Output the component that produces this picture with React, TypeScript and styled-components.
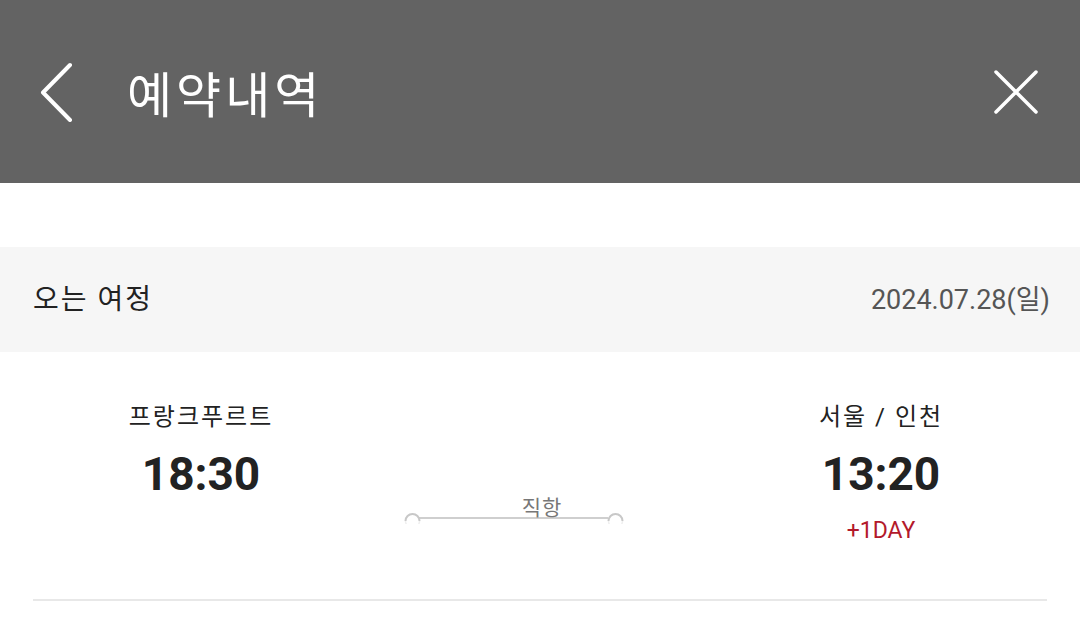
import React from "react";
import styled, { createGlobalStyle } from "styled-components";

const Global = createGlobalStyle`
  html, body { margin: 0; padding: 0; background: #ffffff; }
  body { font-family: Roboto, "Noto Sans CJK KR", sans-serif; color: #222; }
  * { box-sizing: border-box; }
`;

const Page = styled.div`
  width: 1080px;
  min-height: 633px;
  background: #fff;
  overflow: hidden;
`;

const Header = styled.header`
  height: 183px;
  background: #636363;
  display: flex;
  align-items: center;
  padding: 0 41px 0 38px;
`;

const IconButton = styled.button`
  background: none;
  border: 0;
  padding: 0;
  display: flex;
  align-items: center;
  justify-content: center;
  cursor: pointer;
`;

const Title = styled.h1`
  margin: 0 0 0 49px;
  flex: 1;
  color: #fff;
  font-family: "Noto Sans CJK KR", sans-serif;
  font-weight: 400;
  font-size: 49px;
  line-height: 60px;
  letter-spacing: 4px;
`;

const Spacer = styled.div`
  height: 64px;
`;

const SectionBar = styled.div`
  height: 105px;
  background: #f6f6f6;
  display: flex;
  align-items: center;
  justify-content: space-between;
  padding: 0 30px 0 33px;
`;

const SectionTitle = styled.span`
  font-size: 28px;
  color: #222;
  line-height: 36px;
  letter-spacing: 2px;
`;

const SectionDate = styled.span`
  font-size: 27px;
  color: #555;
  line-height: 36px;
`;

const Route = styled.div`
  margin: 0 33px;
  padding: 48px 0 54px;
  display: grid;
  grid-template-columns: 336px 1fr 332px;
  border-bottom: 2px solid #e8e8e8;
`;

const Endpoint = styled.div`
  display: flex;
  flex-direction: column;
  align-items: center;
`;

const City = styled.div`
  font-size: 24px;
  line-height: 30px;
  color: #222;
  letter-spacing: 2px;
  margin-top: 2px;
`;

const Time = styled.div`
  margin-top: 15px;
  font-size: 46px;
  line-height: 54px;
  font-weight: 700;
  color: #222;
`;

const NextDay = styled.div<{ $hidden?: boolean }>`
  margin-top: 16px;
  font-size: 23px;
  line-height: 28px;
  color: #b3192b;
  visibility: ${(p) => (p.$hidden ? "hidden" : "visible")};
`;

const Middle = styled.div`
  display: flex;
  flex-direction: column;
  align-items: center;
  padding-top: 96px;
`;

const Direct = styled.div`
  font-size: 21px;
  line-height: 24px;
  color: #777;
  letter-spacing: 1px;
  position: relative;
  z-index: 1;
`;

const Track = styled.svg`
  display: block;
  margin: -10px 0 0 -54px;
`;

const Back = () => (
  <svg width="40" height="60" viewBox="0 0 40 60">
    <polyline
      points="32,9 5,36.5 32,64"
      transform="translate(0,-6)"
      fill="none"
      stroke="#fff"
      strokeWidth="4"
      strokeLinecap="round"
      strokeLinejoin="round"
    />
  </svg>
);

const Close = () => (
  <svg width="46" height="46" viewBox="0 0 46 46">
    <path
      d="M3 3 L43 43 M43 3 L3 43"
      fill="none"
      stroke="#fff"
      strokeWidth="3.5"
      strokeLinecap="round"
    />
  </svg>
);

export default function App() {
  return (
    <Page>
      <Global />
      <Header>
        <IconButton aria-label="뒤로">
          <Back />
        </IconButton>
        <Title>예약내역</Title>
        <IconButton aria-label="닫기">
          <Close />
        </IconButton>
      </Header>
      <Spacer />
      <SectionBar>
        <SectionTitle>오는 여정</SectionTitle>
        <SectionDate>2024.07.28(일)</SectionDate>
      </SectionBar>
      <Route>
        <Endpoint>
          <City>프랑크푸르트</City>
          <Time>18:30</Time>
        </Endpoint>
        <Middle>
          <Direct>직항</Direct>
          <Track width="224" height="14" viewBox="0 0 224 14">
            <line x1="16" y1="8" x2="205" y2="8" stroke="#cfcfcf" strokeWidth="2" />
            <path d="M2.5 11 A7 7 0 0 1 16.5 11" fill="none" stroke="#c8c8c8" strokeWidth="2" />
            <path d="M2.5 11 A7 7 0 0 0 16.5 11" fill="none" stroke="#efefef" strokeWidth="1.5" />
            <path d="M205.5 11 A7 7 0 0 1 219.5 11" fill="none" stroke="#c8c8c8" strokeWidth="2" />
            <path d="M205.5 11 A7 7 0 0 0 219.5 11" fill="none" stroke="#efefef" strokeWidth="1.5" />
          </Track>
        </Middle>
        <Endpoint>
          <City>서울 / 인천</City>
          <Time>13:20</Time>
          <NextDay>+1DAY</NextDay>
        </Endpoint>
      </Route>
    </Page>
  );
}
